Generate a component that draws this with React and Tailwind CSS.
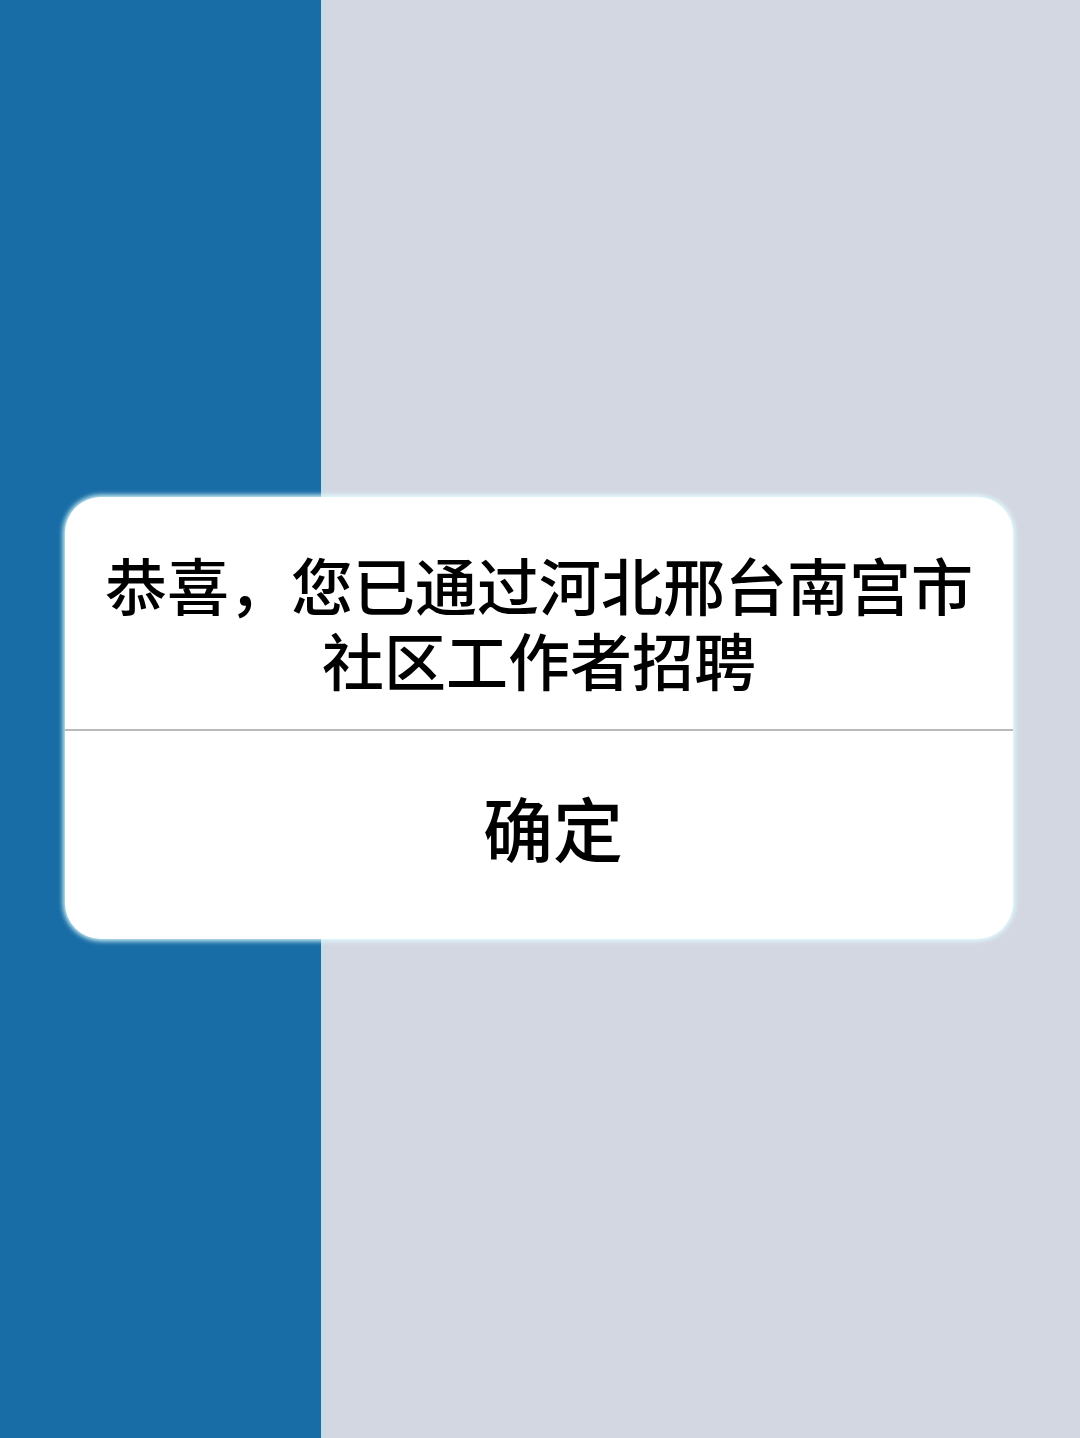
import React from "react";

function App() {
  return (
    <div
      className="relative w-full h-[1438px] flex overflow-hidden"
      style={{ fontFamily: '"Noto Sans CJK SC", "Noto Sans", sans-serif' }}
    >
      {/* Background columns */}
      <div className="w-[321px] h-full bg-[#186da6]" />
      <div className="w-[8px] h-full bg-gradient-to-r from-[#c4dce8] to-[#d3d7e2]" />
      <div className="flex-1 h-full bg-[#d3d7e2]" />

      {/* Alert dialog */}
      <div className="absolute left-[65px] top-[497px] w-[948px] rounded-[36px] bg-white shadow-[0_0_5px_2px_rgba(225,255,255,0.95)] flex flex-col overflow-hidden">
        <div className="pt-[50px] pb-[32px] text-center text-black text-[62px] leading-[75px] font-medium">
          <div>恭喜，您已通过河北邢台南宫市</div>
          <div>社区工作者招聘</div>
        </div>
        <div className="h-[2px] bg-[#b9bbb9]" />
        <div className="pt-[61px] pb-[77px] pl-[28px] text-center text-black text-[70px] leading-[70px] font-medium">
          确定
        </div>
      </div>
    </div>
  );
}

export default App;
